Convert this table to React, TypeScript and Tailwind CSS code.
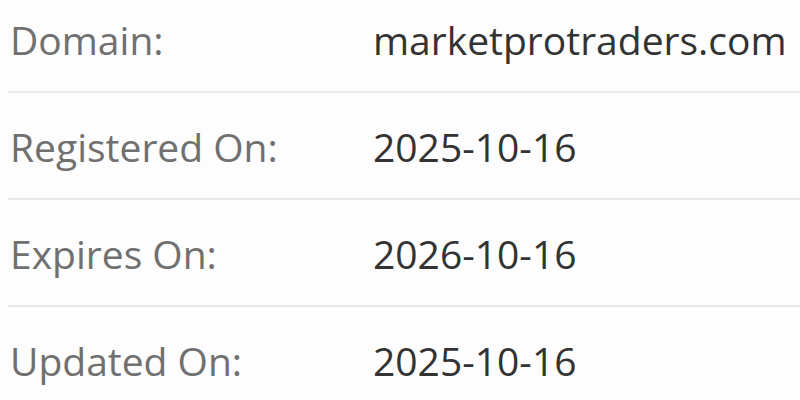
import React from "react";

const rows = [
  { label: "Domain:", value: "marketprotraders.com" },
  { label: "Registered On:", value: "2025-10-16" },
  { label: "Expires On:", value: "2026-10-16" },
  { label: "Updated On:", value: "2025-10-16" },
];

export default function App() {
  return (
    <div
      className="w-[800px] h-[400px] overflow-hidden bg-[#fdfdfd] pl-[8px]"
      style={{ fontFamily: '"Open Sans", "Noto Sans", sans-serif' }}
    >
      {rows.map((r, i) => (
        <div
          key={r.label}
          className={`flex items-start border-b-[2px] border-[#e8e8e8] pb-[23px] ${i === 0 ? "pt-[11px]" : "pt-[25px]"}`}
        >
          <div className="w-[365px] shrink-0 pl-[2px] text-[39px] leading-[57px] text-[#707070] whitespace-nowrap">{r.label}</div>
          <div className="shrink-0 text-[39px] leading-[57px] text-[#333333] whitespace-nowrap">{r.value}</div>
        </div>
      ))}
    </div>
  );
}
